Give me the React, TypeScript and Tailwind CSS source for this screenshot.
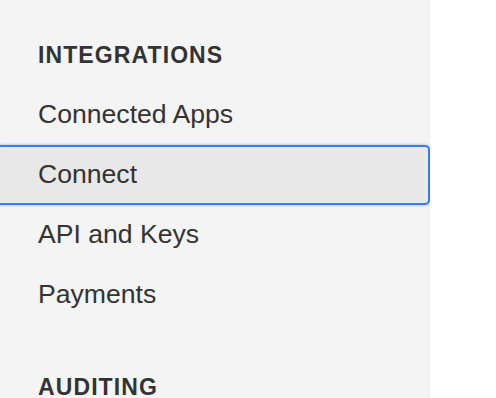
import React from 'react';

const sections = [
  {
    title: 'Integrations',
    items: ['Connected Apps', 'Connect', 'API and Keys', 'Payments'],
  },
  {
    title: 'Auditing',
    items: [] as string[],
  },
];

const App: React.FC = () => {
  const active = 'Connect';

  return (
    <div className="flex h-screen w-full overflow-hidden bg-white" style={{ fontFamily: '"Liberation Sans", Arial, sans-serif' }}>
      {/* Sidebar */}
      <nav className="w-[430px] shrink-0 bg-[#f4f4f4] pt-[41px]">
        {sections.map((section) => (
          <div key={section.title} className="mb-[48px]">
            <h3 className="pl-[38px] text-[23px] leading-[28px] font-bold uppercase tracking-[1.1px] text-[#333] mb-[16px]">
              {section.title}
            </h3>
            <ul>
              {section.items.map((item) => (
                <li key={item}>
                  <div
                    className={
                      item === active
                        ? 'flex h-[60px] items-center pl-[38px] text-[26.6px] text-[#333] bg-[#e8e8e8] border-2 border-l-0 border-[#3a7de8] rounded-r-[5px] shadow-[0_0_3px_rgba(58,125,232,0.6)]'
                        : 'flex h-[60px] items-center pl-[38px] text-[26.6px] text-[#333]'
                    }
                  >
                    {item}
                  </div>
                </li>
              ))}
            </ul>
          </div>
        ))}
      </nav>
      <main className="flex-1 bg-white" />
    </div>
  );
};

export default App;
